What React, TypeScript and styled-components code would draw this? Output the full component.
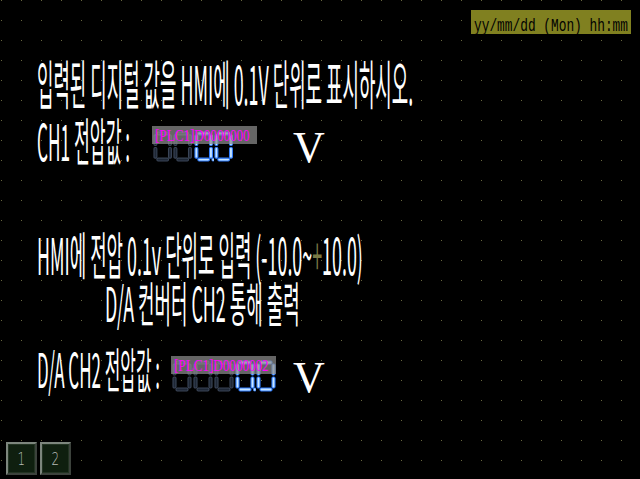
import React, { useLayoutEffect, useRef, useState } from "react";
import styled, { createGlobalStyle } from "styled-components";

const Global = createGlobalStyle`
  html, body { margin: 0; padding: 0; background: #000; overflow: hidden; }
  #root { width: 640px; height: 479px; }
`;

const Screen = styled.div`
  position: relative;
  width: 640px;
  height: 479px;
  overflow: hidden;
  display: flex;
  flex-direction: column;
  background-color: #66663f;
  background-image:
    repeating-linear-gradient(90deg, transparent 0 1px, #000 1px 20px),
    repeating-linear-gradient(180deg, transparent 0 1px, #000 1px 20px);
  background-position: 1px 0, 0 0;
`;

const TopBar = styled.div`
  display: flex;
  justify-content: flex-end;
  padding: 10px 9px 0 0;
`;

const DateBox = styled.div`
  width: 160px;
  height: 24px;
  background: #808020;
  display: flex;
  align-items: center;
  padding-left: 3px;
  box-sizing: border-box;
`;

const FitBox = styled.div<{ $w: number; $h: number }>`
  position: relative;
  width: ${(p) => p.$w}px;
  height: ${(p) => p.$h}px;
  flex: none;
`;

const FitInner = styled.span<{ $font: string; $fs: number; $color: string }>`
  display: inline-block;
  white-space: pre;
  transform-origin: 0 0;
  font-family: ${(p) => p.$font};
  font-size: ${(p) => p.$fs}px;
  line-height: 1;
  color: ${(p) => p.$color};
`;

type FitProps = {
  w: number;
  h: number;
  sy: number;
  dy?: number;
  fs: number;
  font: string;
  color?: string;
  children: React.ReactNode;
};

function Fit({ w, h, sy, dy = 0, fs, font, color = "#fff", children }: FitProps) {
  const ref = useRef<HTMLSpanElement>(null);
  const [sx, setSx] = useState(1);
  useLayoutEffect(() => {
    const measure = () => {
      if (ref.current) setSx(w / ref.current.offsetWidth);
    };
    measure();
    if ((document as any).fonts?.ready) (document as any).fonts.ready.then(measure);
  }, [w]);
  return (
    <FitBox $w={w} $h={h}>
      <FitInner
        ref={ref}
        $font={font}
        $fs={fs}
        $color={color}
        style={{ transform: `translateY(${dy}px) scale(${sx}, ${sy})` }}
      >
        {children}
      </FitInner>
    </FitBox>
  );
}

const KR = `"Noto Sans CJK KR", "Noto Sans", sans-serif`;

/* Hangul ink in Noto Sans CJK KR at 20px: about 16.9px tall, starting 2.07px below the line box top */
const krScale = (h: number) => ({ sy: h / 16.9, dy: -2.07 * (h / 16.9) });

const Body = styled.div`
  display: flex;
  flex-direction: column;
  padding-left: 37px;
`;

const Line = styled.div<{ $mt: number; $ml?: number }>`
  margin-top: ${(p) => p.$mt}px;
  margin-left: ${(p) => p.$ml ?? 0}px;
`;

const ValueRow = styled.div<{ $mt: number; $label: number; $disp: number }>`
  margin-top: ${(p) => p.$mt}px;
  display: grid;
  grid-template-columns: ${(p) => p.$label}px ${(p) => p.$disp}px auto;
  align-items: start;
`;

const Display = styled.div`
  position: relative;
  width: 105px;
  height: 40px;
  margin-top: 6px;
`;

const Digits = styled.div<{ $top: number }>`
  position: absolute;
  left: 1px;
  top: ${(p) => p.$top}px;
  display: flex;
`;

const Overlay = styled.div`
  position: absolute;
  left: 0;
  top: 0;
  width: 105px;
  height: 18px;
  background: rgba(140, 140, 140, 0.72);
  display: flex;
  align-items: center;
  padding-left: 3px;
  box-sizing: border-box;
`;

const Unit = styled.div`
  margin-top: 6px;
  font-family: "Liberation Serif", "Times New Roman", serif;
  font-size: 44px;
  line-height: 1;
  color: #fff;
`;

const Plus = styled.span`
  color: #7a7a44;
`;

const Footer = styled.div`
  margin-top: auto;
  display: flex;
  gap: 3px;
  padding: 0 0 4px 6px;
`;

const PageButton = styled.div`
  width: 31px;
  height: 33px;
  box-sizing: border-box;
  border: 2px solid;
  border-color: #7d867d #3c423c #3c423c #7d867d;
  background: #0f1f0f;
  box-shadow: inset 0 0 0 1px #223322;
  display: flex;
  align-items: center;
  justify-content: center;
  color: #b8bcb8;
  font-family: "DejaVu Sans", sans-serif;
  font-weight: 300;
  font-size: 17px;
`;

const ButtonLabel = styled.span`
  display: inline-block;
  transform: scaleX(0.7);
`;

const SEG: Record<string, [number, number, number, number]> = {
  a: [4, 1, 12, 3],
  b: [16, 4, 3, 11],
  c: [16, 17, 3, 11],
  d: [4, 28, 12, 3],
  e: [1, 17, 3, 11],
  f: [1, 4, 3, 11],
};

function SevenZero({ lit, dot, h }: { lit: boolean; dot?: boolean; h: number }) {
  const fill = lit ? "#c8e6ff" : "#1e2735";
  const stroke = lit ? "#2f7dff" : "#3a4557";
  const scale = h / 32;
  return (
    <svg width={21 * scale} height={h} viewBox="0 0 21 32">
      {Object.entries(SEG).map(([k, [x, y, w, hh]]) => (
        <rect key={k} x={x} y={y} width={w} height={hh} rx={1.2} fill={fill} stroke={stroke} strokeWidth={1.1} />
      ))}
      {dot && <rect x={18.5} y={28} width={2.5} height={3} rx={0.8} fill="#c8e6ff" stroke="#2f7dff" strokeWidth={0.8} />}
    </svg>
  );
}

function ValueDisplay({ digits, addr, top, h }: { digits: { lit: boolean; dot?: boolean }[]; addr: string; top: number; h: number }) {
  return (
    <Display>
      <Digits $top={top}>
        {digits.map((d, i) => (
          <SevenZero key={i} lit={d.lit} dot={d.dot} h={h} />
        ))}
      </Digits>
      <Overlay>
        <Fit w={95} h={16} sy={1.05} dy={-1} fs={16} font={`"Liberation Serif", serif`} color="#ff00ff">
          {addr}
        </Fit>
      </Overlay>
    </Display>
  );
}

export default function App() {
  const l1 = krScale(45);
  const l2 = krScale(43);
  const l3 = krScale(43);
  const l4 = krScale(40);
  const l5 = krScale(40);
  return (
    <Screen>
      <Global />
      <TopBar>
        <DateBox>
          <Fit w={154} h={19} sy={1.45} dy={-1} fs={13} font={`"Liberation Mono", monospace`} color="#000">
            yy/mm/dd (Mon) hh:mm
          </Fit>
        </DateBox>
      </TopBar>
      <Body>
        <Line $mt={29}>
          <Fit w={376} h={45} {...l1} fs={20} font={KR}>
            입력된 디지털 값을 HMI에 0.1V 단위로 표시하시오.
          </Fit>
        </Line>
        <ValueRow $mt={12} $label={115} $disp={141}>
          <Fit w={93} h={43} {...l2} fs={20} font={KR}>
            CH1 전압값 :
          </Fit>
          <ValueDisplay
            addr="[PLC1]D0000000"
            top={5}
            h={31}
            digits={[{ lit: false }, { lit: false }, { lit: true, dot: true }, { lit: true }]}
          />
          <Unit>V</Unit>
        </ValueRow>
        <Line $mt={64}>
          <Fit w={326} h={43} {...l3} fs={20} font={KR}>
            HMI에 전압 0.1v 단위로 입력 (-10.0~<Plus>+</Plus>10.0)
          </Fit>
        </Line>
        <Line $mt={7} $ml={68}>
          <Fit w={195} h={40} {...l4} fs={20} font={KR}>
            D/A 컨버터 CH2 통해 출력
          </Fit>
        </Line>
        <ValueRow $mt={26} $label={134} $disp={122}>
          <Fit w={123} h={40} {...l5} fs={20} font={KR}>
            D/A CH2 전압값 :
          </Fit>
          <ValueDisplay
            addr="[PLC1]D0000002"
            top={4}
            h={32}
            digits={[{ lit: false }, { lit: false }, { lit: false }, { lit: true, dot: true }, { lit: true }]}
          />
          <Unit>V</Unit>
        </ValueRow>
      </Body>
      <Footer>
        <PageButton>
          <ButtonLabel>1</ButtonLabel>
        </PageButton>
        <PageButton>
          <ButtonLabel>2</ButtonLabel>
        </PageButton>
      </Footer>
    </Screen>
  );
}
